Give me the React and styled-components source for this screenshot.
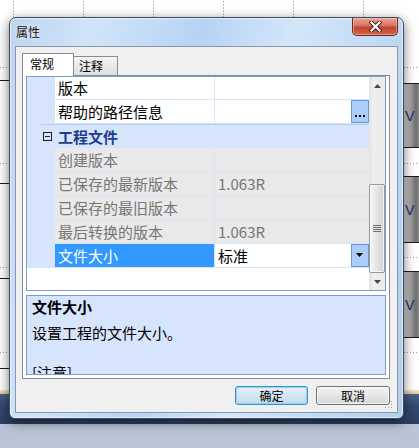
import React from "react";
import styled, { createGlobalStyle } from "styled-components";

const GlobalStyle = createGlobalStyle`
  html, body {
    margin: 0;
    padding: 0;
  }
  body {
    width: 419px;
    height: 448px;
    overflow: hidden;
    background: #fff;
    font-family: "Noto Sans CJK SC", "Noto Sans", sans-serif;
  }
`;

/* ---------- background sheet ---------- */

const Desktop = styled.div`
  position: relative;
  width: 419px;
  height: 448px;
  overflow: hidden;
`;

const Sheet = styled.div`
  display: flex;
  flex-direction: column;
  height: 100%;
`;

const SheetBody = styled.div`
  display: flex;
  height: 390px;
  flex-shrink: 0;
`;

const Strip = styled.div`
  width: ${(p) => p.$w}px;
  flex-shrink: 0;
  display: flex;
  flex-direction: column;
  background: #fff;
  overflow: hidden;
`;

const Cells = styled.div`
  flex: 1;
  background:
    repeating-linear-gradient(180deg, #fff 0 1px, transparent 1px 3px),
    repeating-linear-gradient(90deg, transparent 0 4px, #bdbdbd 4px 5px, transparent 5px 70px);
`;

const Gap = styled.div`
  height: ${(p) => p.$h}px;
  flex-shrink: 0;
`;

const SolidRule = styled.div`
  height: 1px;
  flex-shrink: 0;
  background: #1c1c1c;
`;

const DotRule = styled.div`
  height: 1px;
  flex-shrink: 0;
  background: repeating-linear-gradient(90deg, #a6a6a6 0 1px, transparent 1px 3px);
`;

const HeaderBlock = styled.div`
  height: ${(p) => p.$h}px;
  flex-shrink: 0;
  display: flex;
  align-items: center;
  padding-left: 1px;
  background: linear-gradient(90deg, #d6d6d6 0%, #a2a2a2 45%, #6c6c6c 80%, #8d8d8d 100%);
  color: #27356e;
  font: 14px "DejaVu Sans", sans-serif;
`;

const BeigeRule = styled.div`
  height: 4px;
  flex-shrink: 0;
  background: linear-gradient(#efe6c8, #d8c99a);
`;

const NavyBar = styled.div`
  height: 30px;
  flex-shrink: 0;
  background: linear-gradient(#4b6189, #33496f 40%, #2b3f63);
`;

const Floor = styled.div`
  flex: 1;
  background: #b9c5d6;
`;

const leftSegments = [
  ["gap", 67], ["dot"], ["gap", 12], ["line"], ["gap", 82], ["dot"], ["gap", 19],
  ["line"], ["gap", 83], ["dot"], ["gap", 10], ["line"], ["gap", 73], ["dot"],
  ["gap", 15], ["line"],
];

const rightSegments = [
  ["gap", 67], ["dot"], ["gap", 15], ["line"], ["block", 63], ["line"], ["gap", 15],
  ["dot"], ["gap", 12], ["line"], ["block", 65], ["line"], ["gap", 14], ["dot"],
  ["gap", 13], ["line"], ["block", 65], ["line"], ["gap", 14], ["dot"],
];

function Rules({ segments }) {
  return segments.map(([type, h], i) => {
    if (type === "gap") return <Gap key={i} $h={h} />;
    if (type === "dot") return <DotRule key={i} />;
    if (type === "line") return <SolidRule key={i} />;
    return (
      <HeaderBlock key={i} $h={h}>
        V
      </HeaderBlock>
    );
  });
}

/* ---------- window frame ---------- */

const Window = styled.div`
  position: absolute;
  left: 9px;
  top: 17px;
  width: 395px;
  box-sizing: border-box;
  padding: 0 5px 5px 5px;
  border: 1px solid #3d4b5e;
  border-radius: 7px 7px 6px 6px;
  background: linear-gradient(100deg, #bdd5ef 0%, #d1e4f8 18%, #b6d3f4 42%, #d4e6f9 62%, #c0d9f4 82%, #b3cdeb 100%);
  box-shadow: inset 0 0 0 1px rgba(255, 255, 255, 0.6), 0 3px 12px rgba(0, 0, 0, 0.55);
`;

const TitleBar = styled.div`
  display: flex;
  justify-content: space-between;
  align-items: flex-start;
  height: 28px;
`;

const Title = styled.div`
  padding-left: 1px;
  font-size: 12px;
  line-height: 28px;
  color: #111;
  text-shadow: 0 0 6px rgba(255, 255, 255, 0.9);
`;

const CloseButton = styled.div`
  width: 46px;
  height: 18px;
  box-sizing: border-box;
  display: flex;
  align-items: center;
  justify-content: center;
  border: 1px solid #6b2a20;
  border-top: none;
  border-radius: 0 0 5px 5px;
  background: linear-gradient(#e9a497 0%, #dc7865 42%, #c4432d 56%, #d2644d 100%);
  box-shadow: inset 0 0 0 1px rgba(255, 220, 210, 0.45);
`;

const Client = styled.div`
  position: relative;
  display: flex;
  flex-direction: column;
  height: 367px;
  box-sizing: border-box;
  padding: 6px 7px 0 6px;
  border: 1px solid #8797ad;
  background: #f0f0f0;
`;

/* ---------- tabs ---------- */

const TabHeader = styled.div`
  display: flex;
  align-items: flex-end;
  height: 22px;
`;

const Tab = styled.div`
  position: relative;
  box-sizing: border-box;
  width: ${(p) => p.$w}px;
  height: ${(p) => (p.$active ? 23 : 19)}px;
  margin-bottom: ${(p) => (p.$active ? -1 : 0)}px;
  margin-left: ${(p) => (p.$active ? 0 : -1)}px;
  z-index: ${(p) => (p.$active ? 1 : 0)};
  padding-left: ${(p) => p.$pad}px;
  border: 1px solid #898c95;
  border-bottom: none;
  background: ${(p) => (p.$active ? "#fff" : "linear-gradient(#f4f4f4, #dedede)")};
  font-size: 12px;
  line-height: ${(p) => (p.$active ? 20 : 17)}px;
  color: #000;
`;

const TabPage = styled.div`
  display: flex;
  flex-direction: column;
  gap: 4px;
  height: 304px;
  box-sizing: border-box;
  padding: 0 3px 3px 3px;
  border: 1px solid #898c95;
  background: #fff;
`;

/* ---------- property grid ---------- */

const Grid = styled.div`
  display: flex;
  height: 215px;
  box-sizing: border-box;
  border: 1px solid #7c9dd2;
  background: #fff;
`;

const Viewport = styled.div`
  flex: 1;
  overflow: hidden;
`;

const RowList = styled.div`
  margin-top: -1px;
`;

const Row = styled.div`
  display: flex;
  height: 24px;
  font-size: 15px;
  line-height: 23px;
`;

const Margin = styled.div`
  width: 28px;
  flex-shrink: 0;
  background: #d6e5fb;
`;

const rowColors = {
  normal: { bg: "#fff", fg: "#000" },
  readonly: { bg: "#e9e9e9", fg: "#767676" },
  selected: { bg: "#3399ff", fg: "#fff" },
};

const NameCell = styled.div`
  width: 160px;
  flex-shrink: 0;
  box-sizing: border-box;
  padding-left: 3px;
  border-right: 1px solid #d6e5fb;
  border-bottom: 1px solid #d6e5fb;
  background: ${(p) => rowColors[p.$kind].bg};
  color: ${(p) => rowColors[p.$kind].fg};
  white-space: nowrap;
  overflow: hidden;
`;

const ValueCell = styled.div`
  flex: 1;
  display: flex;
  box-sizing: border-box;
  border-bottom: 1px solid #d6e5fb;
  background: ${(p) => (p.$kind === "readonly" ? "#e9e9e9" : "#fff")};
  color: ${(p) => (p.$kind === "readonly" ? "#767676" : "#000")};
`;

const ValueText = styled.span`
  flex: 1;
  padding-left: 3px;
  white-space: nowrap;
`;

const CellButton = styled.div`
  width: 18px;
  flex-shrink: 0;
  box-sizing: border-box;
  display: flex;
  align-items: center;
  justify-content: center;
  border: 1px solid #6b96d6;
  background: #aacdfa;
`;

const CategoryRow = styled.div`
  display: flex;
  align-items: center;
  height: 24px;
  background: linear-gradient(#b4ccee, #b4ccee) 14px 0 / 100% 1px no-repeat, #d6e5fb;
`;

const Toggle = styled.div`
  position: relative;
  width: 9px;
  height: 9px;
  box-sizing: border-box;
  margin-left: 16px;
  border: 1px solid #1e1e1e;

  &::after {
    content: "";
    position: absolute;
    left: 1px;
    top: 3px;
    width: 5px;
    height: 1px;
    background: #1e1e1e;
  }
`;

const CategoryName = styled.span`
  margin-left: 6px;
  font-size: 15px;
  font-weight: bold;
  color: #1d3c90;
`;

/* ---------- scrollbar ---------- */

const ScrollBar = styled.div`
  width: 16px;
  flex-shrink: 0;
  display: flex;
  flex-direction: column;
  background: linear-gradient(90deg, #e2e2e2, #eeeeee 25%, #ececec);
`;

const ArrowButton = styled.div`
  height: 17px;
  display: flex;
  align-items: center;
  justify-content: center;
`;

const Track = styled.div`
  flex: 1;
  padding-top: 90px;
`;

const Thumb = styled.div`
  height: 89px;
  box-sizing: border-box;
  display: flex;
  align-items: center;
  justify-content: center;
  border: 1px solid #979797;
  border-radius: 2px;
  background: linear-gradient(90deg, #f6f6f6, #e6e6e6 45%, #d2d2d2);
  box-shadow: inset 0 0 0 1px rgba(255, 255, 255, 0.7);
`;

/* ---------- description ---------- */

const Description = styled.div`
  height: 80px;
  box-sizing: border-box;
  padding: 1px 5px 0;
  border: 1px solid #7c9dd2;
  background: #d6e5fb;
  overflow: hidden;
  font-size: 15px;
  line-height: 20px;
  color: #000;
`;

const DescTitle = styled.div`
  font-weight: bold;
  margin-bottom: 6px;
`;

const DescLine = styled.div`
  min-height: 20px;
`;

/* ---------- footer ---------- */

const Footer = styled.div`
  display: flex;
  justify-content: flex-end;
  gap: 8px;
  margin-top: 7px;
`;

const DialogButton = styled.div`
  width: ${(p) => p.$w}px;
  height: 19px;
  box-sizing: border-box;
  display: flex;
  align-items: center;
  justify-content: center;
  border: 1px solid ${(p) => (p.$default ? "#3c93d2" : "#707070")};
  border-radius: 3px;
  background: ${(p) =>
    p.$default
      ? "linear-gradient(#e6f1f9, #d5e6f2 50%, #c3d9e8)"
      : "linear-gradient(#f3f3f3, #e6e6e6 50%, #d6d6d6)"};
  box-shadow: ${(p) =>
    p.$default ? "inset 0 0 0 1px #8fd0f5" : "inset 0 0 0 1px rgba(255,255,255,0.7)"};
  font-size: 12px;
  color: #000;
`;

const Grip = styled.svg`
  position: absolute;
  right: 4px;
  bottom: 3px;
`;

/* ---------- data ---------- */

const rows = [
  { kind: "normal", name: "版本", value: "" },
  { kind: "normal", name: "帮助的路径信息", value: "", button: "more" },
  { kind: "category", name: "工程文件" },
  { kind: "readonly", name: "创建版本", value: "" },
  { kind: "readonly", name: "已保存的最新版本", value: "1.063R" },
  { kind: "readonly", name: "已保存的最旧版本", value: "" },
  { kind: "readonly", name: "最后转换的版本", value: "1.063R" },
  { kind: "selected", name: "文件大小", value: "标准", button: "drop" },
];

function ButtonGlyph({ type }) {
  if (type === "more") {
    return (
      <svg width="12" height="21" viewBox="0 0 12 21">
        <rect x="1" y="14" width="2" height="2" fill="#000" />
        <rect x="5" y="14" width="2" height="2" fill="#000" />
        <rect x="9" y="14" width="2" height="2" fill="#000" />
      </svg>
    );
  }
  return (
    <svg width="8" height="5" viewBox="0 0 8 5">
      <path d="M0 0 H7 L3.5 4 Z" fill="#000" />
    </svg>
  );
}

function PropertyRow({ row }) {
  if (row.kind === "category") {
    return (
      <CategoryRow>
        <Toggle />
        <CategoryName>{row.name}</CategoryName>
      </CategoryRow>
    );
  }
  const valueKind = row.kind === "selected" ? "normal" : row.kind;
  return (
    <Row>
      <Margin />
      <NameCell $kind={row.kind}>{row.name}</NameCell>
      <ValueCell $kind={valueKind}>
        <ValueText>{row.value}</ValueText>
        {row.button && (
          <CellButton>
            <ButtonGlyph type={row.button} />
          </CellButton>
        )}
      </ValueCell>
    </Row>
  );
}

export default function App() {
  return (
    <>
      <GlobalStyle />
      <Desktop>
        <Sheet>
          <SheetBody>
            <Strip $w={9}>
              <Rules segments={leftSegments} />
            </Strip>
            <Cells />
            <Strip $w={15}>
              <Rules segments={rightSegments} />
            </Strip>
          </SheetBody>
          <BeigeRule />
          <NavyBar />
          <Floor />
        </Sheet>

        <Window>
          <TitleBar>
            <Title>属性</Title>
            <CloseButton>
              <svg width="13" height="11" viewBox="0 0 13 11">
                <path d="M2.5 1.5 L10.5 9.5 M10.5 1.5 L2.5 9.5" stroke="#4a130c" strokeWidth="4" strokeLinecap="square" />
                <path d="M2.5 1.5 L10.5 9.5 M10.5 1.5 L2.5 9.5" stroke="#fff" strokeWidth="2.2" strokeLinecap="square" />
              </svg>
            </CloseButton>
          </TitleBar>

          <Client>
            <TabHeader>
              <Tab $active $w={52} $pad={7}>
                常规
              </Tab>
              <Tab $w={45} $pad={5}>
                注释
              </Tab>
            </TabHeader>
            <TabPage>
              <Grid>
                <Viewport>
                  <RowList>
                    {rows.map((row, i) => (
                      <PropertyRow key={i} row={row} />
                    ))}
                  </RowList>
                </Viewport>
                <ScrollBar>
                  <ArrowButton>
                    <svg width="7" height="4" viewBox="0 0 7 4">
                      <path d="M0 4 H7 L3.5 0 Z" fill="#4a4a4a" />
                    </svg>
                  </ArrowButton>
                  <Track>
                    <Thumb>
                      <svg width="8" height="8" viewBox="0 0 8 8">
                        <path d="M0 0.5 H8 M0 2.5 H8 M0 4.5 H8 M0 6.5 H8" stroke="#6e6e6e" strokeWidth="1" />
                      </svg>
                    </Thumb>
                  </Track>
                  <ArrowButton>
                    <svg width="7" height="4" viewBox="0 0 7 4">
                      <path d="M0 0 H7 L3.5 4 Z" fill="#4a4a4a" />
                    </svg>
                  </ArrowButton>
                </ScrollBar>
              </Grid>
              <Description>
                <DescTitle>文件大小</DescTitle>
                <DescLine>设置工程的文件大小。</DescLine>
                <DescLine />
                <DescLine>[注意]</DescLine>
              </Description>
            </TabPage>
            <Footer>
              <DialogButton $default $w={73}>
                确定
              </DialogButton>
              <DialogButton $w={74}>取消</DialogButton>
            </Footer>
            <Grip width="8" height="8" viewBox="0 0 8 8">
              <rect x="6" y="0" width="1" height="1" fill="#9a9a9a" />
              <rect x="3" y="3" width="1" height="1" fill="#9a9a9a" />
              <rect x="6" y="3" width="1" height="1" fill="#9a9a9a" />
              <rect x="0" y="6" width="1" height="1" fill="#9a9a9a" />
              <rect x="3" y="6" width="1" height="1" fill="#9a9a9a" />
              <rect x="6" y="6" width="1" height="1" fill="#9a9a9a" />
            </Grip>
          </Client>
        </Window>
      </Desktop>
    </>
  );
}
